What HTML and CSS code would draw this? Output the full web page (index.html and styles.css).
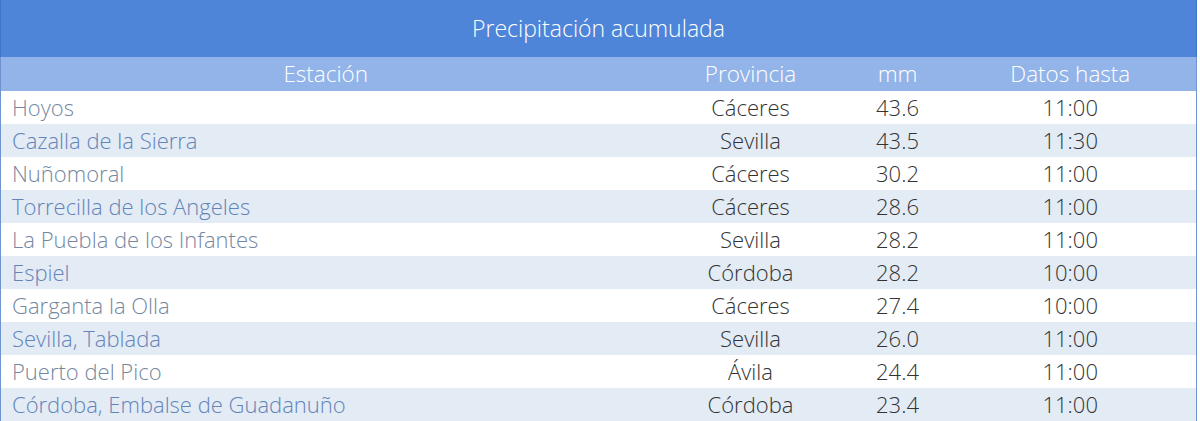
FILE: index.html
```html
<!DOCTYPE html>
<html lang="es">
<head>
<meta charset="utf-8">
<title>Precipitación acumulada</title>
<link rel="stylesheet" href="styles.css">
</head>
<body>
<div class="wrap">
  <table class="rain">
    <caption class="title">Precipitación acumulada</caption>
    <colgroup>
      <col class="c-est"><col class="c-prov"><col class="c-mm"><col class="c-hora">
    </colgroup>
    <thead>
      <tr><th>Estación</th><th>Provincia</th><th>mm</th><th>Datos hasta</th></tr>
    </thead>
    <tbody>
      <tr><td class="name">Hoyos</td><td>Cáceres</td><td>43.6</td><td>11:00</td></tr>
      <tr><td class="name">Cazalla de la Sierra</td><td>Sevilla</td><td>43.5</td><td>11:30</td></tr>
      <tr><td class="name">Nuñomoral</td><td>Cáceres</td><td>30.2</td><td>11:00</td></tr>
      <tr><td class="name">Torrecilla de los Angeles</td><td>Cáceres</td><td>28.6</td><td>11:00</td></tr>
      <tr><td class="name">La Puebla de los Infantes</td><td>Sevilla</td><td>28.2</td><td>11:00</td></tr>
      <tr><td class="name">Espiel</td><td>Córdoba</td><td>28.2</td><td>10:00</td></tr>
      <tr><td class="name">Garganta la Olla</td><td>Cáceres</td><td>27.4</td><td>10:00</td></tr>
      <tr><td class="name">Sevilla, Tablada</td><td>Sevilla</td><td>26.0</td><td>11:00</td></tr>
      <tr><td class="name">Puerto del Pico</td><td>Ávila</td><td>24.4</td><td>11:00</td></tr>
      <tr><td class="name">Córdoba, Embalse de Guadanuño</td><td>Córdoba</td><td>23.4</td><td>11:00</td></tr>
    </tbody>
  </table>
</div>
</body>
</html>
```
FILE: styles.css
```css
html, body {
  margin: 0;
  padding: 0;
  background: #ffffff;
}
body {
  font-family: "Open Sans", "Noto Sans", "DejaVu Sans", sans-serif;
}
.wrap {
  width: 1196px;
}
.rain {
  width: 1196px;
  border-collapse: collapse;
  table-layout: fixed;
  border-left: 1px solid #6f93cf;
  border-right: 1px solid #6f93cf;
}
.c-est { width: 650px; }
.c-prov { width: 200px; }
.c-mm { width: 94px; }
.c-hora { width: 252px; }
.title {
  background: #4f85d8;
  color: #ffffff;
  height: 57px;
  line-height: 57px;
  font-size: 23px;
  font-weight: 300;
  text-align: center;
  padding: 0;
  border-left: 1px solid #3f74c6;
  border-right: 1px solid #3f74c6;
}
thead th {
  background: #93b4e8;
  color: #ffffff;
  font-weight: 300;
  font-size: 22.5px;
  height: 34px;
  line-height: 34px;
  padding: 0;
  text-align: center;
}
tbody td {
  height: 33px;
  line-height: 33px;
  padding: 0;
  font-size: 22px;
  font-weight: 300;
  color: #333333;
  text-align: center;
  white-space: nowrap;
}
tbody tr:nth-child(even) td {
  background: #e3ebf5;
}
tbody td.name {
  text-align: left;
  padding-left: 11px;
  color: #74879f;
}
tbody tr:nth-child(even) td.name {
  color: #6384b8;
}
```
